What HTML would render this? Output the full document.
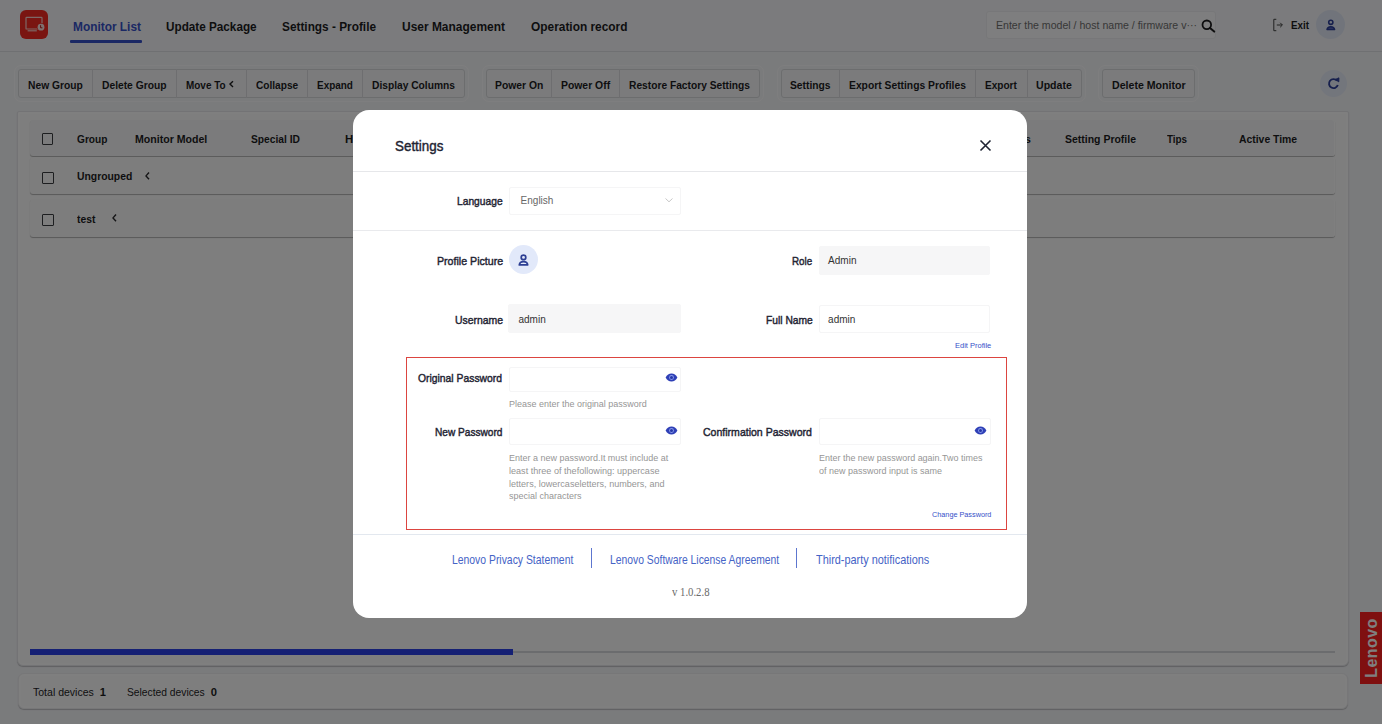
<!DOCTYPE html>
<html><head><meta charset="utf-8"><title>Settings</title>
<style>
*{box-sizing:border-box;margin:0;padding:0}
html,body{width:1382px;height:724px;overflow:hidden}
body{position:relative;background:#f5f6f9;font-family:"Liberation Sans",sans-serif}
.a{position:absolute}
.t{position:absolute;white-space:nowrap;line-height:20px;transform-origin:0 50%}
#hdr{left:0;top:0;width:1382px;height:52px;background:#f6f7fa;border-bottom:1px solid #dfe0e4}
.grp{position:absolute;top:69px;height:29px;border:1px solid #d9dadd;border-radius:3px;background:#f6f7f9;outline:1px solid rgba(255,255,255,.8);outline-offset:3px}
.dv{position:absolute;top:69px;width:1px;height:29px;background:#dcdde1}
.chk{position:absolute;width:11.5px;height:11.5px;border:1.1px solid #3a3c40;border-radius:1px;background:transparent}
.row{position:absolute;left:30px;width:1305px;border-radius:3px;box-shadow:0 1px 1px rgba(0,0,0,.3),inset -1px 0 0 #fff}
#ov{left:0;top:0;width:1382px;height:724px;background:rgba(0,0,0,.5)}
#modal{left:353px;top:110px;width:674px;height:508px;background:#fff;border-radius:16px;overflow:hidden}
.inp{position:absolute;border:1px solid #f5f5f6;border-radius:2px;background:#fff}
.dis{background:#f6f6f7;border-color:#f6f6f7}
</style></head>
<body>
<!-- header -->
<div id="hdr" class="a"></div>
<div class="a" style="left:20px;top:10px;width:28px;height:29px;background:#f42a22;border-radius:6px"></div>
<svg class="a" style="left:20px;top:10px" width="28" height="29" viewBox="0 0 28 29">
  <rect x="6" y="7.4" width="16" height="11.6" rx="0.6" fill="none" stroke="#fbd0cc" stroke-width="1.2"/>
  <line x1="7.6" y1="20.8" x2="16.8" y2="20.8" stroke="#fbd0cc" stroke-width="1.2"/>
  <circle cx="21" cy="17.2" r="4.2" fill="#f42a22"/>
  <circle cx="21" cy="17.2" r="3.4" fill="#fde3e0"/>
  <path d="M20.6 15.2v2.6h1.8" fill="none" stroke="#b81c16" stroke-width="1"/>
</svg>
<div class="a" style="left:70px;top:40px;width:72px;height:3px;background:#3651c9;border-radius:1px"></div>
<div class="a" style="left:986px;top:11px;width:230px;height:28px;background:#fdfdfe;border:1px solid #eeeff2;border-radius:3px"></div>
<svg class="a" style="left:1201px;top:19px" width="15" height="14" viewBox="0 0 15 14">
  <circle cx="5.8" cy="5.8" r="4.3" fill="none" stroke="#1d1d1f" stroke-width="1.8"/>
  <line x1="9" y1="9" x2="13.2" y2="12.6" stroke="#1d1d1f" stroke-width="2" stroke-linecap="round"/>
</svg>
<svg class="a" style="left:1272px;top:18px" width="12" height="14" viewBox="0 0 12 14">
  <path d="M4.3 1.3H1.8v11.4h2.5" fill="none" stroke="#444" stroke-width="1"/>
  <path d="M4.8 7h5.4M8.2 4.8 10.4 7 8.2 9.2" fill="none" stroke="#444" stroke-width="1"/>
</svg>
<div class="a" style="left:1316px;top:10px;width:29px;height:29px;border-radius:50%;background:#e3e9f6"></div>
<svg class="a" style="left:1316px;top:10px" width="29" height="29" viewBox="0 0 29 29">
  <circle cx="14.8" cy="12.3" r="2.1" fill="none" stroke="#2c3f9a" stroke-width="1.6"/>
  <path d="M11 19.6c0.3-2 1.7-2.9 3.8-2.9s3.5 0.9 3.8 2.9z" fill="#5a6cc0" stroke="#2c3f9a" stroke-width="1.5" stroke-linejoin="round"/>
</svg>

<!-- toolbar -->
<div class="grp" style="left:18px;width:447px"></div>
<div class="dv" style="left:92px"></div><div class="dv" style="left:176px"></div><div class="dv" style="left:246px"></div>
<div class="dv" style="left:307px"></div><div class="dv" style="left:362px"></div>
<div class="grp" style="left:486px;width:274px"></div>
<div class="dv" style="left:551px"></div><div class="dv" style="left:619px"></div>
<div class="grp" style="left:781px;width:301px"></div>
<div class="dv" style="left:839px"></div><div class="dv" style="left:975px"></div><div class="dv" style="left:1027px"></div>
<div class="grp" style="left:1102px;width:93px"></div>
<svg class="a" style="left:228px;top:80px" width="7" height="8" viewBox="0 0 7 8"><path d="M5 1.3 2 4.1 5 6.9" fill="none" stroke="#1d1d1f" stroke-width="1.4"/></svg>
<div class="a" style="left:1320px;top:69.5px;width:27px;height:27px;border-radius:50%;background:#e6ecf8"></div>
<svg class="a" style="left:1320px;top:69.5px" width="27" height="27" viewBox="0 0 27 27">
  <path d="M16.9 10.6A4.5 4.5 0 1 0 17.8 15" fill="none" stroke="#2c3f9a" stroke-width="1.9"/>
  <path d="M15.2 9.4 19 7.8 18.8 11.9z" fill="#2c3f9a" stroke="#2c3f9a" stroke-width="0.8" stroke-linejoin="round"/>
</svg>

<!-- table panel -->
<div class="a" style="left:17px;top:111px;width:1332px;height:555px;border:1px solid #e6e7ea;border-radius:2px 2px 6px 6px;background:#fdfdfd;box-shadow:inset 0 0 0 1.5px #fff,0 1px 1px rgba(0,0,0,.22)"></div>
<div class="row" style="top:120px;height:35.6px;background:#f6f7f8"></div>
<div class="row" style="top:157px;height:37px;background:#fafafa"></div>
<div class="row" style="top:199px;height:38px;background:#fafafa"></div>
<div class="chk" style="left:41.5px;top:133px"></div>
<div class="chk" style="left:42px;top:172px"></div>
<div class="chk" style="left:42px;top:214px"></div>
<svg class="a" style="left:143px;top:171px" width="8" height="10" viewBox="0 0 8 10"><path d="M6 1.5 3 4.9 6 8.3" fill="none" stroke="#2a2a2d" stroke-width="1.4"/></svg>
<svg class="a" style="left:110px;top:213px" width="8" height="10" viewBox="0 0 8 10"><path d="M6 1.5 3 4.9 6 8.3" fill="none" stroke="#2a2a2d" stroke-width="1.4"/></svg>
<div class="a" style="left:30px;top:651px;width:1305px;height:2px;background:#d6d8dc"></div>
<div class="a" style="left:29.5px;top:649px;width:483.5px;height:6px;background:#2a40e8;border-radius:0"></div>

<!-- footer panel -->
<div class="a" style="left:18px;top:673px;width:1330px;height:36px;border:1px solid #eeeff1;border-radius:6px;background:#fdfdfd;box-shadow:inset 0 0 0 1.5px #fff,0 1px 1px rgba(0,0,0,.22)"></div>

<div class="t" id="t0" style="left:72.5px;top:17.03px;font-size:12.6px;font-weight:700;color:#3651c9;transform:scaleX(0.9436);">Monitor List</div>
<div class="t" id="t1" style="left:165.6px;top:17.03px;font-size:12.6px;font-weight:700;color:#1d1d1f;transform:scaleX(0.9312);">Update Package</div>
<div class="t" id="t2" style="left:282.3px;top:17.03px;font-size:12.6px;font-weight:700;color:#1d1d1f;transform:scaleX(0.9394);">Settings - Profile</div>
<div class="t" id="t3" style="left:401.8px;top:17.03px;font-size:12.6px;font-weight:700;color:#1d1d1f;transform:scaleX(0.9494);">User Management</div>
<div class="t" id="t4" style="left:530.5px;top:17.03px;font-size:12.6px;font-weight:700;color:#1d1d1f;transform:scaleX(0.9445);">Operation record</div>
<div class="t" id="t5" style="left:995.7px;top:14.62px;font-size:11.2px;font-weight:400;color:#6f6f6f;transform:scaleX(0.9453);">Enter the model / host name / firmware v···</div>
<div class="t" id="t6" style="left:1290.5px;top:14.91px;font-size:11.5px;font-weight:700;color:#1d1d1f;transform:scaleX(0.8533);">Exit</div>
<div class="t" id="t7" style="left:28.2px;top:74.81px;font-size:11.8px;font-weight:700;color:#1d1d1f;transform:scaleX(0.8709);">New Group</div>
<div class="t" id="t8" style="left:101.7px;top:74.81px;font-size:11.8px;font-weight:700;color:#1d1d1f;transform:scaleX(0.8707);">Delete Group</div>
<div class="t" id="t9" style="left:185.7px;top:74.81px;font-size:11.8px;font-weight:700;color:#1d1d1f;transform:scaleX(0.8431);">Move To</div>
<div class="t" id="t10" style="left:256.0px;top:74.81px;font-size:11.8px;font-weight:700;color:#1d1d1f;transform:scaleX(0.8582);">Collapse</div>
<div class="t" id="t11" style="left:317.3px;top:74.81px;font-size:11.8px;font-weight:700;color:#1d1d1f;transform:scaleX(0.8425);">Expand</div>
<div class="t" id="t12" style="left:372.3px;top:74.81px;font-size:11.8px;font-weight:700;color:#1d1d1f;transform:scaleX(0.8671);">Display Columns</div>
<div class="t" id="t13" style="left:495.0px;top:74.81px;font-size:11.8px;font-weight:700;color:#1d1d1f;transform:scaleX(0.8772);">Power On</div>
<div class="t" id="t14" style="left:561.3px;top:74.81px;font-size:11.8px;font-weight:700;color:#1d1d1f;transform:scaleX(0.8812);">Power Off</div>
<div class="t" id="t15" style="left:629.0px;top:74.81px;font-size:11.8px;font-weight:700;color:#1d1d1f;transform:scaleX(0.8665);">Restore Factory Settings</div>
<div class="t" id="t16" style="left:790.0px;top:74.81px;font-size:11.8px;font-weight:700;color:#1d1d1f;transform:scaleX(0.8722);">Settings</div>
<div class="t" id="t17" style="left:849.4px;top:74.81px;font-size:11.8px;font-weight:700;color:#1d1d1f;transform:scaleX(0.8741);">Export Settings Profiles</div>
<div class="t" id="t18" style="left:985.3px;top:74.81px;font-size:11.8px;font-weight:700;color:#1d1d1f;transform:scaleX(0.8535);">Export</div>
<div class="t" id="t19" style="left:1036.2px;top:74.81px;font-size:11.8px;font-weight:700;color:#1d1d1f;transform:scaleX(0.8953);">Update</div>
<div class="t" id="t20" style="left:1112.0px;top:74.81px;font-size:11.8px;font-weight:700;color:#1d1d1f;transform:scaleX(0.8982);">Delete Monitor</div>
<div class="t" id="t21" style="left:76.7px;top:128.78px;font-size:11.6px;font-weight:700;color:#1d1d1f;transform:scaleX(0.8740);">Group</div>
<div class="t" id="t22" style="left:134.9px;top:128.78px;font-size:11.6px;font-weight:700;color:#1d1d1f;transform:scaleX(0.9127);">Monitor Model</div>
<div class="t" id="t23" style="left:251.0px;top:128.78px;font-size:11.6px;font-weight:700;color:#1d1d1f;transform:scaleX(0.8823);">Special ID</div>
<div class="t" id="t24" style="left:345.0px;top:128.78px;font-size:11.6px;font-weight:700;color:#1d1d1f;transform:scaleX(0.9810);">Hostname</div>
<div class="t" id="t25" style="left:1065.0px;top:128.78px;font-size:11.6px;font-weight:700;color:#1d1d1f;transform:scaleX(0.9034);">Setting Profile</div>
<div class="t" id="t26" style="left:1166.7px;top:128.78px;font-size:11.6px;font-weight:700;color:#1d1d1f;transform:scaleX(0.8508);">Tips</div>
<div class="t" id="t27" style="left:1238.7px;top:128.78px;font-size:11.6px;font-weight:700;color:#1d1d1f;transform:scaleX(0.8956);">Active Time</div>
<div class="t" id="t28" style="left:984.5px;top:128.78px;font-size:11.6px;font-weight:700;color:#1d1d1f;transform:scaleX(0.9515);">Versions</div>
<div class="t" id="t29" style="left:77.4px;top:166.28px;font-size:11.6px;font-weight:700;color:#1d1d1f;transform:scaleX(0.8944);">Ungrouped</div>
<div class="t" id="t30" style="left:77.4px;top:208.68px;font-size:11.6px;font-weight:700;color:#1d1d1f;transform:scaleX(0.8921);">test</div>
<div class="t" id="t31" style="left:32.9px;top:682.32px;font-size:11.2px;font-weight:400;color:#1d1d1f;transform:scaleX(0.9401);">Total devices</div>
<div class="t" id="t32" style="left:99.8px;top:682.32px;font-size:11.2px;font-weight:700;color:#1d1d1f;">1</div>
<div class="t" id="t33" style="left:127.0px;top:682.32px;font-size:11.2px;font-weight:400;color:#1d1d1f;transform:scaleX(0.9185);">Selected devices</div>
<div class="t" id="t34" style="left:210.7px;top:682.32px;font-size:11.2px;font-weight:700;color:#1d1d1f;">0</div>

<!-- lenovo badge -->
<div class="a" style="left:1360px;top:612px;width:22px;height:72px;background:#ff2020"></div>
<div class="a" style="left:1371.8px;top:647.5px;width:0;height:0">
  <div style="position:absolute;left:-40px;top:-10px;width:80px;height:20px;line-height:20px;text-align:center;transform:rotate(-90deg);color:#fff;font-size:16px;font-weight:700;letter-spacing:0.4px">Lenovo</div>
</div>

<!-- overlay -->
<div id="ov" class="a"></div>

<!-- modal -->
<div id="modal" class="a">
  <div class="a" style="left:0;top:61px;width:674px;height:1px;background:#e6e7ea"></div>
  <div class="a" style="left:0;top:120px;width:674px;height:1px;background:#e9eaed"></div>
  <div class="a" style="left:0;top:424px;width:674px;height:1px;background:#e3e8ef"></div>
</div>
<div class="a" style="left:0;top:0;width:1382px;height:724px">
  <svg class="a" style="left:979px;top:139px" width="13" height="13" viewBox="0 0 13 13">
    <path d="M1.5 1.5 11.5 11.5M11.5 1.5 1.5 11.5" stroke="#1f2433" stroke-width="1.6"/>
  </svg>
  <div class="inp" style="left:509px;top:187px;width:172px;height:28px"></div>
  <svg class="a" style="left:664px;top:196px" width="10" height="8" viewBox="0 0 10 8"><path d="M1.5 2.5 5 5.8 8.5 2.5" fill="none" stroke="#c8c8c8" stroke-width="1"/></svg>
  <div class="a" style="left:509.2px;top:245.3px;width:29px;height:29px;border-radius:50%;background:#e2e9fa"></div>
  <svg class="a" style="left:509.2px;top:245.3px" width="29" height="29" viewBox="0 0 29 29">
    <circle cx="14.5" cy="12.4" r="2.3" fill="none" stroke="#2d3f94" stroke-width="1.7"/>
    <path d="M10.3 19.9c0.3-2.2 2-3.2 4.2-3.2s3.9 1 4.2 3.2z" fill="none" stroke="#2d3f94" stroke-width="1.7" stroke-linejoin="round"/>
  </svg>
  <div class="inp dis" style="left:819px;top:246px;width:171px;height:29px"></div>
  <div class="inp dis" style="left:508px;top:304px;width:173px;height:29px"></div>
  <div class="inp" style="left:819px;top:305px;width:171px;height:28px"></div>

  <div class="a" style="left:406px;top:357px;width:601px;height:173px;border:1.8px solid #dc4540"></div>
  <div class="inp" style="left:509px;top:367px;width:172px;height:25px"></div>
  <div class="inp" style="left:509px;top:418px;width:172px;height:27px"></div>
  <div class="inp" style="left:819px;top:418px;width:172px;height:27px"></div>

  <svg class="a" style="left:664.6px;top:372.8px" width="13" height="9" viewBox="0 0 13 9">
    <path d="M0.6 4.5C1.9 1.9 4 0.6 6.5 0.6s4.6 1.3 5.9 3.9C11.1 7.1 9 8.4 6.5 8.4S1.9 7.1 0.6 4.5z" fill="#2e3fb6"/>
    <circle cx="6.5" cy="4.5" r="2.4" fill="#8799ea"/><circle cx="6.5" cy="4.5" r="1.5" fill="#2536a6"/>
  </svg>
  <svg class="a" style="left:664.6px;top:426.3px" width="13" height="9" viewBox="0 0 13 9">
    <path d="M0.6 4.5C1.9 1.9 4 0.6 6.5 0.6s4.6 1.3 5.9 3.9C11.1 7.1 9 8.4 6.5 8.4S1.9 7.1 0.6 4.5z" fill="#2e3fb6"/>
    <circle cx="6.5" cy="4.5" r="2.4" fill="#8799ea"/><circle cx="6.5" cy="4.5" r="1.5" fill="#2536a6"/>
  </svg>
  <svg class="a" style="left:973.8px;top:426.3px" width="13" height="9" viewBox="0 0 13 9">
    <path d="M0.6 4.5C1.9 1.9 4 0.6 6.5 0.6s4.6 1.3 5.9 3.9C11.1 7.1 9 8.4 6.5 8.4S1.9 7.1 0.6 4.5z" fill="#2e3fb6"/>
    <circle cx="6.5" cy="4.5" r="2.4" fill="#8799ea"/><circle cx="6.5" cy="4.5" r="1.5" fill="#2536a6"/>
  </svg>

  <div class="a" style="left:590.5px;top:548px;width:1.3px;height:20px;background:#5d76cf"></div>
  <div class="a" style="left:796px;top:548px;width:1.3px;height:20px;background:#5d76cf"></div>
<div class="t" id="t35" style="left:394.8px;top:135.93px;font-size:15.5px;font-weight:400;-webkit-text-stroke:0.45px #1f2433;color:#1f2433;transform:scaleX(0.8640);">Settings</div>
<div class="t" id="t36" style="left:457.1px;top:190.91px;font-size:11.8px;font-weight:400;-webkit-text-stroke:0.45px #1f2433;color:#1f2433;transform:scaleX(0.8686);">Language</div>
<div class="t" id="t37" style="left:436.6px;top:250.91px;font-size:11.8px;font-weight:400;-webkit-text-stroke:0.45px #1f2433;color:#1f2433;transform:scaleX(0.9001);">Profile Picture</div>
<div class="t" id="t38" style="left:792.2px;top:250.91px;font-size:11.8px;font-weight:400;-webkit-text-stroke:0.45px #1f2433;color:#1f2433;transform:scaleX(0.8325);">Role</div>
<div class="t" id="t39" style="left:454.6px;top:309.61px;font-size:11.8px;font-weight:400;-webkit-text-stroke:0.45px #1f2433;color:#1f2433;transform:scaleX(0.8838);">Username</div>
<div class="t" id="t40" style="left:765.6px;top:309.61px;font-size:11.8px;font-weight:400;-webkit-text-stroke:0.45px #1f2433;color:#1f2433;transform:scaleX(0.8704);">Full Name</div>
<div class="t" id="t41" style="left:418.4px;top:368.21px;font-size:11.8px;font-weight:400;-webkit-text-stroke:0.45px #1f2433;color:#1f2433;transform:scaleX(0.8774);">Original Password</div>
<div class="t" id="t42" style="left:434.9px;top:422.01px;font-size:11.8px;font-weight:400;-webkit-text-stroke:0.45px #1f2433;color:#1f2433;transform:scaleX(0.8578);">New Password</div>
<div class="t" id="t43" style="left:703.1px;top:422.01px;font-size:11.8px;font-weight:400;-webkit-text-stroke:0.45px #1f2433;color:#1f2433;transform:scaleX(0.8930);">Confirmation Password</div>
<div class="t" id="t44" style="left:520.6px;top:190.73px;font-size:10px;font-weight:400;color:#666666;">English</div>
<div class="t" id="t45" style="left:828.1px;top:251.03px;font-size:10px;font-weight:400;color:#333333;">Admin</div>
<div class="t" id="t46" style="left:518.5px;top:309.83px;font-size:10px;font-weight:400;color:#333333;">admin</div>
<div class="t" id="t47" style="left:828.1px;top:309.83px;font-size:10px;font-weight:400;color:#333333;">admin</div>
<div class="t" id="t48" style="left:954.7px;top:335.93px;font-size:8px;font-weight:400;color:#3651c9;transform:scaleX(0.9383);">Edit Profile</div>
<div class="t" id="t49" style="left:508.9px;top:393.98px;font-size:9px;font-weight:400;color:#969696;transform:scaleX(0.9979);">Please enter the original password</div>
<div class="t" id="t50" style="left:508.9px;top:447.78px;font-size:9px;font-weight:400;color:#969696;transform:scaleX(0.9982);">Enter a new password.It must include at</div>
<div class="t" id="t51" style="left:508.9px;top:460.98px;font-size:9px;font-weight:400;color:#969696;transform:scaleX(1.0094);">least three of thefollowing: uppercase</div>
<div class="t" id="t52" style="left:508.9px;top:473.58px;font-size:9px;font-weight:400;color:#969696;transform:scaleX(1.0060);">letters, lowercaseletters, numbers, and</div>
<div class="t" id="t53" style="left:508.9px;top:486.38px;font-size:9px;font-weight:400;color:#969696;transform:scaleX(0.9994);">special characters</div>
<div class="t" id="t54" style="left:818.6px;top:447.78px;font-size:9px;font-weight:400;color:#969696;transform:scaleX(0.9958);">Enter the new password again.Two times</div>
<div class="t" id="t55" style="left:818.6px;top:460.98px;font-size:9px;font-weight:400;color:#969696;transform:scaleX(0.9987);">of new password input is same</div>
<div class="t" id="t56" style="left:932.0px;top:504.73px;font-size:8px;font-weight:400;color:#3651c9;transform:scaleX(0.9086);">Change Password</div>
<div class="t" id="t57" style="left:452.0px;top:549.66px;font-size:12.8px;font-weight:400;color:#4563c6;transform:scaleX(0.8120);">Lenovo Privacy Statement</div>
<div class="t" id="t58" style="left:609.6px;top:549.66px;font-size:12.8px;font-weight:400;color:#4563c6;transform:scaleX(0.8090);">Lenovo Software License Agreement</div>
<div class="t" id="t59" style="left:815.5px;top:549.66px;font-size:12.8px;font-weight:400;color:#4563c6;transform:scaleX(0.8511);">Third-party notifications</div>
<div class="t" id="t60" style="left:671.6px;top:582.31px;font-size:11.5px;font-weight:400;color:#6a6a6a;transform:scaleX(0.9317);font-family:'Liberation Serif',serif;">v 1.0.2.8</div>
</div>
</body></html>
